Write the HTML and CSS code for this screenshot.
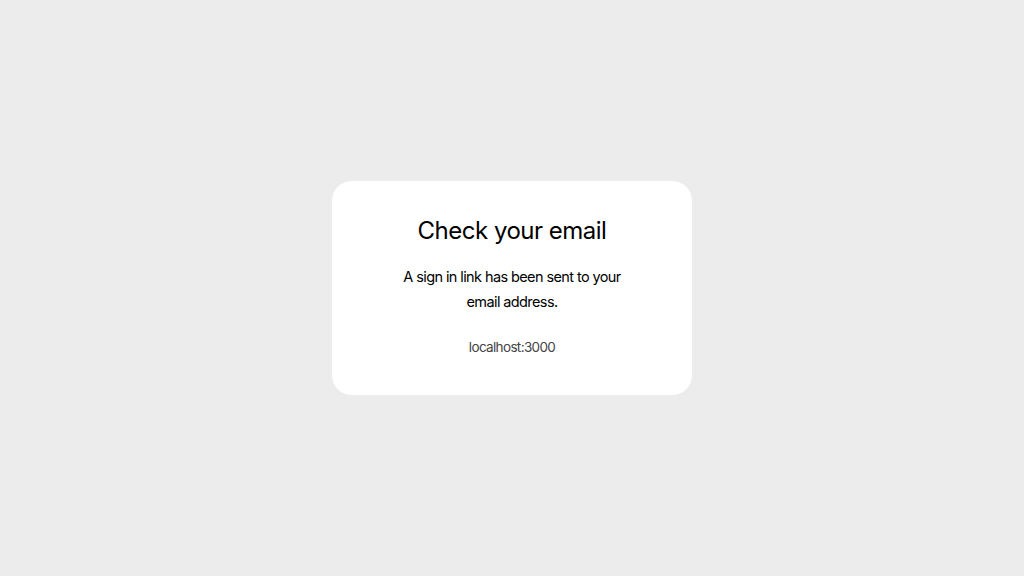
FILE: index.html
```html
<!DOCTYPE html>
<html lang="en">
<head>
<meta charset="utf-8">
<title>Verify Request</title>
<link rel="stylesheet" href="styles.css">
</head>
<body>
<div class="page">
  <div class="verify-request">
    <div class="card">
      <h1 class="title">Check your email</h1>
      <p class="text">A sign in link has been sent to your email address.</p>
      <p class="text"><a class="site" href="#">localhost:3000</a></p>
    </div>
  </div>
</div>
</body>
</html>
```

FILE: styles.css
```css
html, body {
  margin: 0;
  padding: 0;
  height: 100%;
}
body {
  background: #ececec;
  font-family: Inter, "Noto Sans", sans-serif;
  color: #000;
}
.page {
  height: 100%;
  display: flex;
  align-items: center;
  justify-content: center;
}
.card {
  width: 360px;
  box-sizing: border-box;
  background: #fff;
  border-radius: 20px;
  padding: 35px 40px 35px;
  text-align: center;
}
.title {
  font-size: 24px;
  font-weight: 400;
  letter-spacing: -0.5px;
  margin: 0 0 18px;
  line-height: 30px;
}
.text {
  font-size: 14.5px;
  letter-spacing: -0.6px;
  line-height: 25px;
  margin: 0 auto 20px;
  max-width: 222px;
}
.text:last-child {
  margin-bottom: 0;
}
.site {
  color: #444;
  text-decoration: none;
  font-size: 13.5px;
  letter-spacing: -0.65px;
}
```
